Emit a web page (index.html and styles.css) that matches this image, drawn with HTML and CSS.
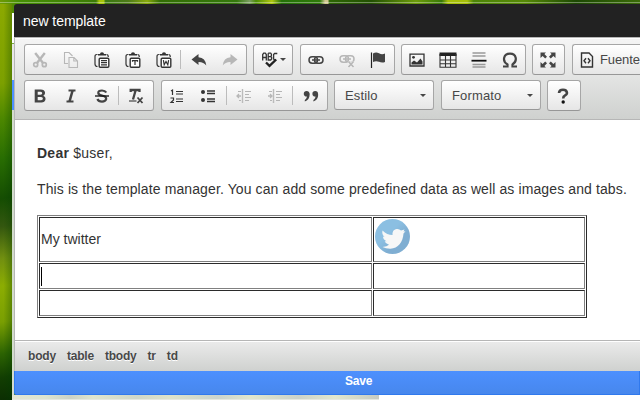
FILE: index.html
```html
<!DOCTYPE html>
<html lang="en">
<head>
<meta charset="utf-8">
<title>new template</title>
<link rel="stylesheet" href="styles.css">
</head>
<body>
<svg class="sprite" aria-hidden="true">
  <symbol id="clip" viewBox="0 0 16 16"><path d="M3.5 2.5H3Q1 2.5 1 4.5V12Q1 14.5 3.5 14.5M12.5 2.5Q14.3 2.5 14.3 5" fill="none" stroke="#333" stroke-width="1.2"/><path d="M4 3.4V2H6Q6 .3 8 .3T10 2H12V3.4z" fill="#333"/><rect x="5.2" y="6.2" width="9.6" height="9" rx="1" fill="#fff" stroke="#333" stroke-width="1.4"/></symbol>
  <symbol id="link" viewBox="0 0 16 16"><rect x="1" y="4.8" width="8.5" height="6.4" rx="3.2" fill="none" stroke="currentColor" stroke-width="1.5"/><rect x="6.5" y="4.8" width="8.5" height="6.4" rx="3.2" fill="none" stroke="currentColor" stroke-width="1.5"/><path d="M4 8H12" stroke="currentColor" stroke-width="1.5"/></symbol>
  <symbol id="undo" viewBox="0 0 16 16"><path d="M.5 7.5L7.5 2V5.2Q14.5 5.5 15.3 13.5Q12.5 9.7 7.5 9.9V13z" fill="currentColor"/></symbol>
  <symbol id="lines" viewBox="0 0 16 16"><path d="M6.5 1V15" stroke="#bbb" stroke-width="1.4"/><path d="M9 3.5H15M9 6.5H13M9 9.5H15M9 12.5H13M2 3.5H5M3 12.5H5" stroke="#b5b5b5"/></symbol>
</svg>
<div class="backdrop"></div>
<main class="dialog">
  <header class="title">new template</header>
  <div class="toolbar">
    <div class="row">
      <div class="group g1">
        <span class="btn off"><svg viewBox="0 0 16 16"><g fill="none" stroke="currentColor"><path d="M3.2 1L11 11M12.8 1L5 11" stroke-width="2.4"/><circle cx="3.7" cy="12.7" r="2" stroke-width="1.7"/><circle cx="12.3" cy="12.7" r="2" stroke-width="1.7"/></g></svg></span>
        <span class="btn off"><svg viewBox="0 0 16 16"><path d="M5 11.5H1.5V.5H6L9.5 4M6 5.5H11L14.5 9V15.5H6zM10.8 5.5V9H14.5" fill="none" stroke="currentColor" stroke-width="1.1"/></svg></span>
        <span class="btn"><svg viewBox="0 0 16 16"><use href="#clip"/><path d="M7 8.6H13M7 10.7H13M7 12.8H13" stroke="#333" stroke-width="1.2"/></svg></span>
        <span class="btn"><svg viewBox="0 0 16 16"><use href="#clip"/><path d="M7.5 9.7V8.6H12.5V9.7M10 8.6V13" fill="none" stroke="#333" stroke-width="1.2"/></svg></span>
        <span class="btn"><svg viewBox="0 0 16 16"><use href="#clip"/><path d="M7.4 8.2L8.2 12.8L10 9.5L11.8 12.8L12.6 8.2" fill="none" stroke="#333" stroke-width="1.2"/></svg></span>
        <i class="sep"></i>
        <span class="btn"><svg viewBox="0 0 16 16"><use href="#undo"/></svg></span>
        <span class="btn off"><svg class="flip" viewBox="0 0 16 16"><use href="#undo"/></svg></span>
      </div>
      <div class="group g2">
        <span class="btn"><svg viewBox="0 0 16 16"><path d="M.7 8.5V2.5L1.7 1.2H3.3L4.3 2.5V8.5M1 5.5H4.3M6.2 1.2V8H8.7L9.6 7V5.4L8.7 4.6H6.2M8.7 4.6L9.4 3.7V2.1L8.7 1.2H6.2M15.3 1.5H12.6L11.6 2.5V7L12.6 8H13.5" fill="none" stroke="#333" stroke-width="1.3"/><path d="M4 10.5L7.5 13.8L14.2 7.5" fill="none" stroke="#222" stroke-width="2.4"/></svg></span><i class="arrow"></i>
      </div>
      <div class="group g3">
        <span class="btn"><svg viewBox="0 0 16 16"><use href="#link"/></svg></span>
        <span class="btn off"><svg viewBox="0 0 16 16"><g transform="translate(0 -1)"><use href="#link" width="16" height="16"/></g><path d="M9.5 9.5L14.5 15M14.5 9.5L9.5 15" stroke="#f4f4f4" stroke-width="3"/><path d="M9.5 9.5L14.5 15M14.5 9.5L9.5 15" stroke="currentColor" stroke-width="1.8"/></svg></span>
        <span class="btn"><svg viewBox="0 0 16 16"><path d="M1.5 .5V16" stroke="#222" stroke-width="1.2"/><path d="M3 1.5Q6-.5 9 1.3T15 1.5V10Q12 11.2 9 9.8T3 10z" fill="#444"/></svg></span>
      </div>
      <div class="group g4">
        <span class="btn"><svg viewBox="0 0 16 16"><path d="M1 2.2H15V14H1z" fill="none" stroke="#333" stroke-width="1.3"/><circle cx="4.5" cy="5.3" r="1.4" fill="#333"/><path d="M2.5 12.5V10.5L5 8.5L8 10.5L11.5 6.5L13.5 9.5V12.5z" fill="#333"/></svg></span>
        <span class="btn"><svg class="wide" viewBox="0 0 18 16"><path d="M.5 .5H17.5V4H.5z" fill="#222"/><path d="M1 2V15.3H17V2M6.5 4V15M11.5 4V15M1 8H17M1 11.7H17" fill="none" stroke="#333" stroke-width="1.1"/></svg></span>
        <span class="btn"><svg viewBox="0 0 16 16"><path d="M1.5 1H14.5M1.5 4H14.5M1.5 12.5H14.5M1.5 15H14.5" stroke="#999" stroke-width="1.4"/><path d="M.5 8.7H15.5" stroke="#111" stroke-width="1.8"/></svg></span>
        <span class="btn"><svg viewBox="0 0 16 16"><path d="M1 14.5H5.5V12.5C-.2 9 1.5 1.7 8 1.7S15.8 9 10.5 12.5V14.5H15" fill="none" stroke="#444" stroke-width="2.2"/></svg></span>
      </div>
      <div class="group g5">
        <span class="btn"><svg viewBox="0 0 16 16"><path d="M.5 .5H6L4.4 2.1L7 4.7L5.2 6.5L2.6 3.9L.5 6zM15.5 .5H10L11.6 2.1L9 4.7L10.8 6.5L13.4 3.9L15.5 6zM.5 15.5H6L4.4 13.9L7 11.3L5.2 9.5L2.6 12L.5 10zM15.5 15.5H10L11.6 13.9L9 11.3L10.8 9.5L13.4 12L15.5 10z" fill="#444"/></svg></span>
      </div>
      <div class="group g6">
        <span class="btn source"><svg viewBox="0 0 16 16"><path d="M2.5 1H10L13.5 4.5V15H2.5z" fill="none" stroke="#333" stroke-width="1.4"/><path d="M7 6.3L5 8.8L7 11.3M9 6.3L11 8.8L9 11.3" fill="none" stroke="#333" stroke-width="1.4"/></svg>Fuente</span>
      </div>
    </div>
    <div class="row">
      <div class="group g7">
        <span class="btn"><svg viewBox="0 0 16 16"><path fill-rule="evenodd" d="M2.7 1.5H8.8C14 1.5 14 6.7 11.2 7.7C15 9 14 14.5 9.5 14.5H2.7zM5.7 3.8V6.8H8.5C10.8 6.8 10.8 3.8 8.5 3.8zM5.7 9V12.2H9C11.5 12.2 11.5 9 9 9z" fill="#444"/></svg></span>
        <span class="btn"><svg viewBox="0 0 16 16"><path d="M5.5 2.5H12.5M3.5 13.5H10.5" stroke="#444" stroke-width="1.8"/><path d="M9.6 2.5L6.5 13.5" stroke="#444" stroke-width="2.5"/></svg></span>
        <span class="btn"><svg viewBox="0 0 16 16"><path d="M12.3 4.5Q11 2.5 8 2.5Q4 2.5 4.3 5Q4.5 7 8 7.7Q12.4 8.5 12.2 11Q11.5 13.6 8 13.6Q4.5 13.6 3.4 11" fill="none" stroke="#444" stroke-width="2.2"/><path d="M1 8H15" stroke="#111" stroke-width="1.3"/></svg></span>
        <i class="sep"></i>
        <span class="btn"><svg viewBox="0 0 16 16"><path d="M2.7 4V2H11.5V4M7.7 2L5 11.5" fill="none" stroke="#444" stroke-width="2.3"/><path d="M1 13H8.5" stroke="#222"/><path d="M9.5 9.5L14.5 15M14.5 9.5L9.5 15" stroke="#444" stroke-width="1.8"/></svg></span>
      </div>
      <div class="group g8">
        <span class="btn"><svg viewBox="0 0 16 16"><path d="M2 3L3.5 2V7M1.5 10H4.5V12L2 14.5H5" fill="none" stroke="#333" stroke-width="1.2"/><path d="M7 3.5H14M7 6H14M7 11H14M7 13.5H14" stroke="#333" stroke-width="1.2"/></svg></span>
        <span class="btn"><svg viewBox="0 0 16 16"><circle cx="3" cy="4" r="2" fill="#333"/><circle cx="3" cy="12" r="2" fill="#333"/><path d="M7 3H15M7 5.5H15M7 11H15M7 13.5H15" stroke="#333" stroke-width="1.3"/></svg></span>
        <i class="sep"></i>
        <span class="btn off"><svg viewBox="0 0 16 16"><use href="#lines"/><path d="M5 8H1M3 6L1 8L3 10" fill="none" stroke="currentColor" stroke-width="1.3"/></svg></span>
        <span class="btn off"><svg viewBox="0 0 16 16"><use href="#lines"/><path d="M1 8H5M3 6L5 8L3 10" fill="none" stroke="currentColor" stroke-width="1.3"/></svg></span>
        <i class="sep"></i>
        <span class="btn"><svg viewBox="0 0 16 16"><g fill="#444"><circle cx="3.6" cy="5.7" r="2.8"/><path d="M6.4 5.2C7.2 10 4.5 12.7 1.8 13.4V12Q4.3 10.3 3.8 7z"/><circle cx="12.2" cy="5.7" r="2.8"/><path d="M15 5.2C15.8 10 13.1 12.7 10.4 13.4V12Q12.9 10.3 12.4 7z"/></g></svg></span>
      </div>
      <div class="group combo">Estilo<i class="arrow"></i></div>
      <div class="group combo">Formato<i class="arrow"></i></div>
      <div class="group g9">
        <span class="btn"><svg viewBox="0 0 16 16"><path d="M4 5Q4.3 1.7 8 1.7T12 5Q12 6.6 9.8 7.7Q8.2 8.5 8.2 10.5" fill="none" stroke="#444" stroke-width="2.6"/><circle cx="8.2" cy="14" r="1.7" fill="#111"/></svg></span>
      </div>
    </div>
  </div>
  <section class="content">
    <p class="greeting"><strong>Dear</strong> $user,</p>
    <p class="intro">This is the template manager. You can add some predefined data as well as images and tabs.</p>
    <table>
      <tr class="tall"><td>My twitter</td><td class="pic"><svg class="bird" viewBox="0 0 35 35"><defs><linearGradient id="sky" x1="0" y1="0" x2="1" y2="1"><stop offset=".4" stop-color="#8bbfe2"/><stop offset=".65" stop-color="#7faed2"/></linearGradient></defs><circle cx="17.5" cy="17.5" r="17.5" fill="url(#sky)"/><path d="M7.5 11.5Q12 16 17.5 16C17 11.5 20 10 22.5 10Q24.5 10 26 11.5L29.5 10.5L28.5 12.5L30.5 12.3L28.5 14.5C28 23 23 29.5 15.5 29.7Q11 29.8 7.5 28Q12 27.5 14 25.8Q10.5 25 9.7 22.3H11.5Q8 20.5 8 17.5L9.5 18Q6.5 15 7.5 11.5z" fill="#f6f7f7"/></svg></td></tr>
      <tr><td><i class="caret"></i></td><td></td></tr>
      <tr><td></td><td></td></tr>
    </table>
  </section>
  <footer class="path"><span>body</span><span>table</span><span>tbody</span><span>tr</span><span>td</span></footer>
  <div class="save">Save</div>
</main>
</body>
</html>
```
FILE: styles.css
```css
* { box-sizing: border-box; }
body {
  margin: 0;
  width: 640px;
  height: 400px;
  overflow: hidden;
  position: relative;
  font-family: "Liberation Sans", Arial, sans-serif;
  color: #333;
  background:
    linear-gradient(90deg, #e2e5d2, #dde4cf 9%, #ccd2c6 16%, #e0e5cd 22%, #d0d7c8 34%, #dde2c9 43%, #cbd4cd 56%, #e1e6cc 65%, #cbd2c9 78%, #e2e7cd 88%, #c7cbc2) 12px 395px / 367px 4px no-repeat,
    linear-gradient(#e6e8df, #e6e8df) 12px 399px / 367px 1px no-repeat,
    linear-gradient(#4d90fe, #4d90fe) 12px 80px / 2px 30px no-repeat,
    linear-gradient(#fff 0 30px, #78a840 30px 31px, #e8e8e8 31px 67px, #d3dccd 67px) 12px 13px / 2px 387px no-repeat,
    linear-gradient(rgba(255,255,255,.35), rgba(255,255,255,.35)) 0 2px / 640px 1px no-repeat,
    linear-gradient(90deg, #6f9a04, #468f04 3%, #3b7b05 15%, #a5c509 15.5% 16.2%, #3a7810 16.5%, #4c7a18 20%, #87a90b 23%, #326d04 25%, #34780c 37%, #7a9e60 39%, #4b8c05 40%, #b0c80f 42.5%, #247008 44%, #2e7a09 50%, #d0c890 50.8% 51.2%, #2d6504 51.5%, #225002 58%, #6b9a0a 65%, #387906 69%, #a6bf08 70% 73%, #4c8407 74%, #558806 82%, #1c4803 90%, #3a6b08) 0 0 / 640px 4px no-repeat,
    linear-gradient(#fff, #fff) 379px 395px / 261px 5px no-repeat,
    #508b04;
}
.sprite { position: absolute; width: 0; height: 0; }
.backdrop {
  position: absolute;
  left: 0;
  top: 4px;
  width: 12px;
  height: 396px;
  background:
    linear-gradient(90deg, rgba(0,50,0,0) 30%, rgba(0,60,0,.3)),
    linear-gradient(172deg, #8ca900 0, #7ca000 20%, #4c8700 29%, #286d02 39%, #154d02 49%, #34570f 56%, #718f10 64%, #8cad02 71%, #7a9f02 80%, #2c6302 88%, #123e02 94%, #0b2d02);
}
.dialog {
  position: relative;
  margin: 4px 0 0 14px;
  width: 626px;
  height: 391px;
  display: flex;
  flex-direction: column;
}
.title {
  height: 33px;
  padding: 0 9px;
  border-radius: 3px 0 0;
  background: #222;
  color: #fff;
  font-size: 14px;
  letter-spacing: -.05px;
  line-height: 34px;
}
.toolbar {
  height: 83px;
  padding: 6px 0 0 9px;
  border: 1px solid #b6b6b6;
  border-right: 0;
  background: linear-gradient(#f5f5f5, #cfd1cf);
  box-shadow: inset 0 1px #fff;
}
.row { display: flex; height: 36px; }
.row .group { flex: none; }
.group {
  height: 31px;
  margin-right: 6px;
  display: flex;
  align-items: center;
  border: 1px solid #a6a6a6;
  border-bottom-color: #979797;
  border-radius: 3px;
  background: linear-gradient(#fff, #e6e6e6);
}
.g1 { width: 223px; }
.g2 { width: 40px; }
.g3 { width: 95px; }
.g4 { width: 125px; }
.g5 { width: 33px; }
.row .g6 { width: 68px; margin: 0; border-right: 0; border-radius: 3px 0 0 3px; }
.g7 { width: 130px; margin-right: 7px; }
.g8 { width: 167px; }
.g9 { width: 34px; }
.g2, .g5 { margin-right: 7px; }
.btn {
  width: 30.8px;
  height: 28px;
  flex: none;
  display: flex;
  align-items: center;
  justify-content: center;
  color: #444;
}
.btn svg { width: 16px; height: 16px; display: block; }
.btn svg.wide { width: 18px; }
.btn svg.flip { transform: scaleX(-1); }
.off { color: #b7b7b7; }
.g2 .btn { width: 31px; }
.source {
  width: auto;
  padding-left: 6px;
  gap: 5px;
  font-size: 13px;
  letter-spacing: -.1px;
  color: #474747;
}
.source svg { flex: none; }
.sep { width: 1px; height: 19px; flex: none; background: #bcbcbc; margin: 0 2px; }
.g1 .sep { margin: 0 3px 0 1px; }
.g7 .sep { margin: 0 1px; }
.arrow { border: 3px solid transparent; border-top-color: #474747; border-bottom: 0; flex: none; }
.g2 .arrow { margin-left: -5px; }
.combo {
  width: 100px;
  height: 30px;
  margin-right: 7px;
  padding: 0 7px 0 10px;
  justify-content: space-between;
  color: #474747;
  font-size: 13px;
  letter-spacing: .15px;
}
.combo + .g9 { margin-left: -1px; }
.content {
  height: 220px;
  padding: 26px 12px 0 22px;
  border-left: 1px solid #b6b6b6;
  background: #fff;
  font-size: 14px;
  line-height: 15px;
}
.content p { margin: 0 0 21px; white-space: nowrap; }
.content .intro { margin-bottom: 18px; letter-spacing: .112px; }
.greeting { letter-spacing: .25px; }
table {
  width: 550px;
  table-layout: fixed;
  border: 1px solid;
  border-color: #808080 #2b2b2b #2b2b2b #808080;
  border-spacing: 1px;
  border-collapse: separate;
}
td {
  height: 26px;
  padding: 1px;
  border: 1px solid;
  border-color: #2b2b2b #808080 #808080 #2b2b2b;
}
td:first-child { width: 333px; }
.tall td { height: 45px; }
.pic { vertical-align: top; }
.bird { display: block; width: 35px; height: 35px; }
.caret { display: block; width: 1px; height: 19px; background: #000; }
.path {
  height: 31px;
  padding: 0 13px;
  display: flex;
  gap: 11px;
  border-top: 1px solid #b6b6b6;
  border-left: 1px solid #b6b6b6;
  box-shadow: inset 0 1px #fff;
  background: linear-gradient(#ebebeb, #cfd1cf);
  color: #484848;
  font-size: 12px;
  letter-spacing: -.2px;
  font-weight: bold;
  line-height: 30px;
  text-shadow: 0 1px 0 #fff;
}
.save {
  height: 24px;
  padding-left: 330px;
  border: 1px solid #3079ed;
  border-top: 0;
  border-radius: 0 0 0 2px;
  background: linear-gradient(#4d90fe, #4787ed);
  color: #fff;
  font-size: 12px;
  letter-spacing: -.2px;
  font-weight: bold;
  line-height: 20px;
}
```
